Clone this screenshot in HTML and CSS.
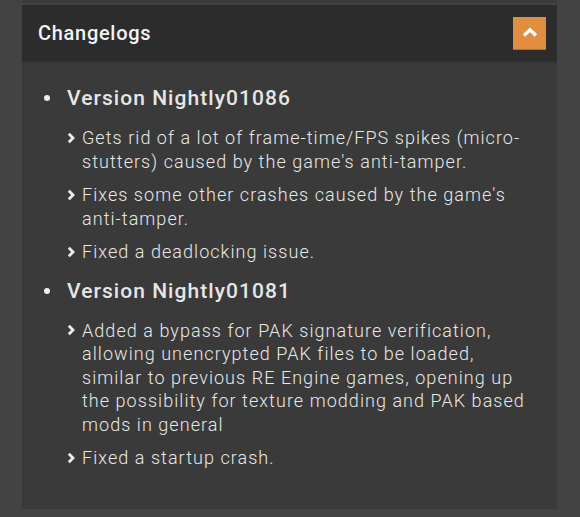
FILE: index.html
```html
<!DOCTYPE html>
<html>
<head>
<meta charset="utf-8">
<link rel="stylesheet" href="styles.css">
</head>
<body>
<div class="wrap">
  <div class="prev"></div>
  <section class="panel">
    <header class="panel-head">
      <h2 class="title">Changelogs</h2>
      <button class="toggle" aria-label="Collapse">
        <svg width="16" height="11" viewBox="0 0 16 11"><path d="M2 8.5 L8 2.8 L14 8.5" fill="none" stroke="#fff" stroke-width="3.4" stroke-linejoin="miter"/></svg>
      </button>
    </header>
    <div class="panel-body">
      <ul class="versions">
        <li class="version">
          <h3 class="vname">Version Nightly01086</h3>
          <ul class="changes">
            <li class="change"><span class="chev"><svg width="9" height="12" viewBox="0 0 9 12"><path d="M1.8 1.8 L6 6 L1.8 10.2" fill="none" stroke="#ececec" stroke-width="2.8"/></svg></span><span class="txt">Gets rid of a lot of frame-time/FPS spikes (micro-stutters) caused by the game's anti-tamper.</span></li>
            <li class="change"><span class="chev"><svg width="9" height="12" viewBox="0 0 9 12"><path d="M1.8 1.8 L6 6 L1.8 10.2" fill="none" stroke="#ececec" stroke-width="2.8"/></svg></span><span class="txt">Fixes some other crashes caused by the game's anti-tamper.</span></li>
            <li class="change"><span class="chev"><svg width="9" height="12" viewBox="0 0 9 12"><path d="M1.8 1.8 L6 6 L1.8 10.2" fill="none" stroke="#ececec" stroke-width="2.8"/></svg></span><span class="txt">Fixed a deadlocking issue.</span></li>
          </ul>
        </li>
        <li class="version">
          <h3 class="vname">Version Nightly01081</h3>
          <ul class="changes">
            <li class="change"><span class="chev"><svg width="9" height="12" viewBox="0 0 9 12"><path d="M1.8 1.8 L6 6 L1.8 10.2" fill="none" stroke="#ececec" stroke-width="2.8"/></svg></span><span class="txt">Added a bypass for PAK signature verification, allowing unencrypted PAK files to be loaded, similar to previous RE Engine games, opening up the possibility for texture modding and PAK based mods in general</span></li>
            <li class="change"><span class="chev"><svg width="9" height="12" viewBox="0 0 9 12"><path d="M1.8 1.8 L6 6 L1.8 10.2" fill="none" stroke="#ececec" stroke-width="2.8"/></svg></span><span class="txt">Fixed a startup crash.</span></li>
          </ul>
        </li>
      </ul>
    </div>
  </section>
</div>
</body>
</html>
```
FILE: styles.css
```css
html, body {
  margin: 0;
  padding: 0;
  background: #434343;
  font-family: Roboto, "Liberation Sans", sans-serif;
}
.wrap {
  padding: 0 23px 0 22px;
}
.prev {
  height: 3px;
  background: #3a3a3a;
  margin-bottom: 2px;
}
.panel {
  background: #3a3a3a;
}
.panel-head {
  height: 56px;
  background: #2c2c2c;
  border-bottom: 2px solid #333333;
  display: flex;
  align-items: center;
  justify-content: space-between;
  padding: 0 11px 0 16px;
}
.title {
  margin: 0;
  font-size: 20px;
  font-weight: 500;
  color: #f2f2f2;
  letter-spacing: 0.7px;
}
.toggle {
  width: 33px;
  height: 33px;
  border: 0;
  border-bottom: 1px solid #b86f2c;
  background: #df8f3f;
  padding: 0;
  display: flex;
  align-items: center;
  justify-content: center;
}
.panel-body {
  padding: 21px 25px 39px 0;
}
.versions {
  margin: 0;
  padding: 0 0 0 45px;
  list-style: none;
  color: #e6e6e6;
}
.version {
  position: relative;
}
.version::before {
  content: "";
  position: absolute;
  left: -23px;
  top: 11px;
  width: 6px;
  height: 6px;
  border-radius: 50%;
  background: #f0f0f0;
}
.version + .version {
  margin-top: 13px;
}
.vname {
  margin: 0;
  font-size: 21px;
  line-height: 28px;
  font-weight: 500;
  color: #e6e6e6;
  letter-spacing: 1.05px;
}
.changes {
  list-style: none;
  margin: 14px 0 0;
  padding: 0;
}
.change {
  display: flex;
  font-size: 18px;
  line-height: 23.5px;
  font-weight: 300;
  color: #e8e8e8;
  letter-spacing: 1.05px;
}
.change + .change {
  margin-top: 10px;
}
.chev {
  flex: none;
  width: 15px;
  height: 23.5px;
  display: flex;
  align-items: center;
}
.chev svg {
  display: block;
}
.txt {
  flex: 1;
}
```
